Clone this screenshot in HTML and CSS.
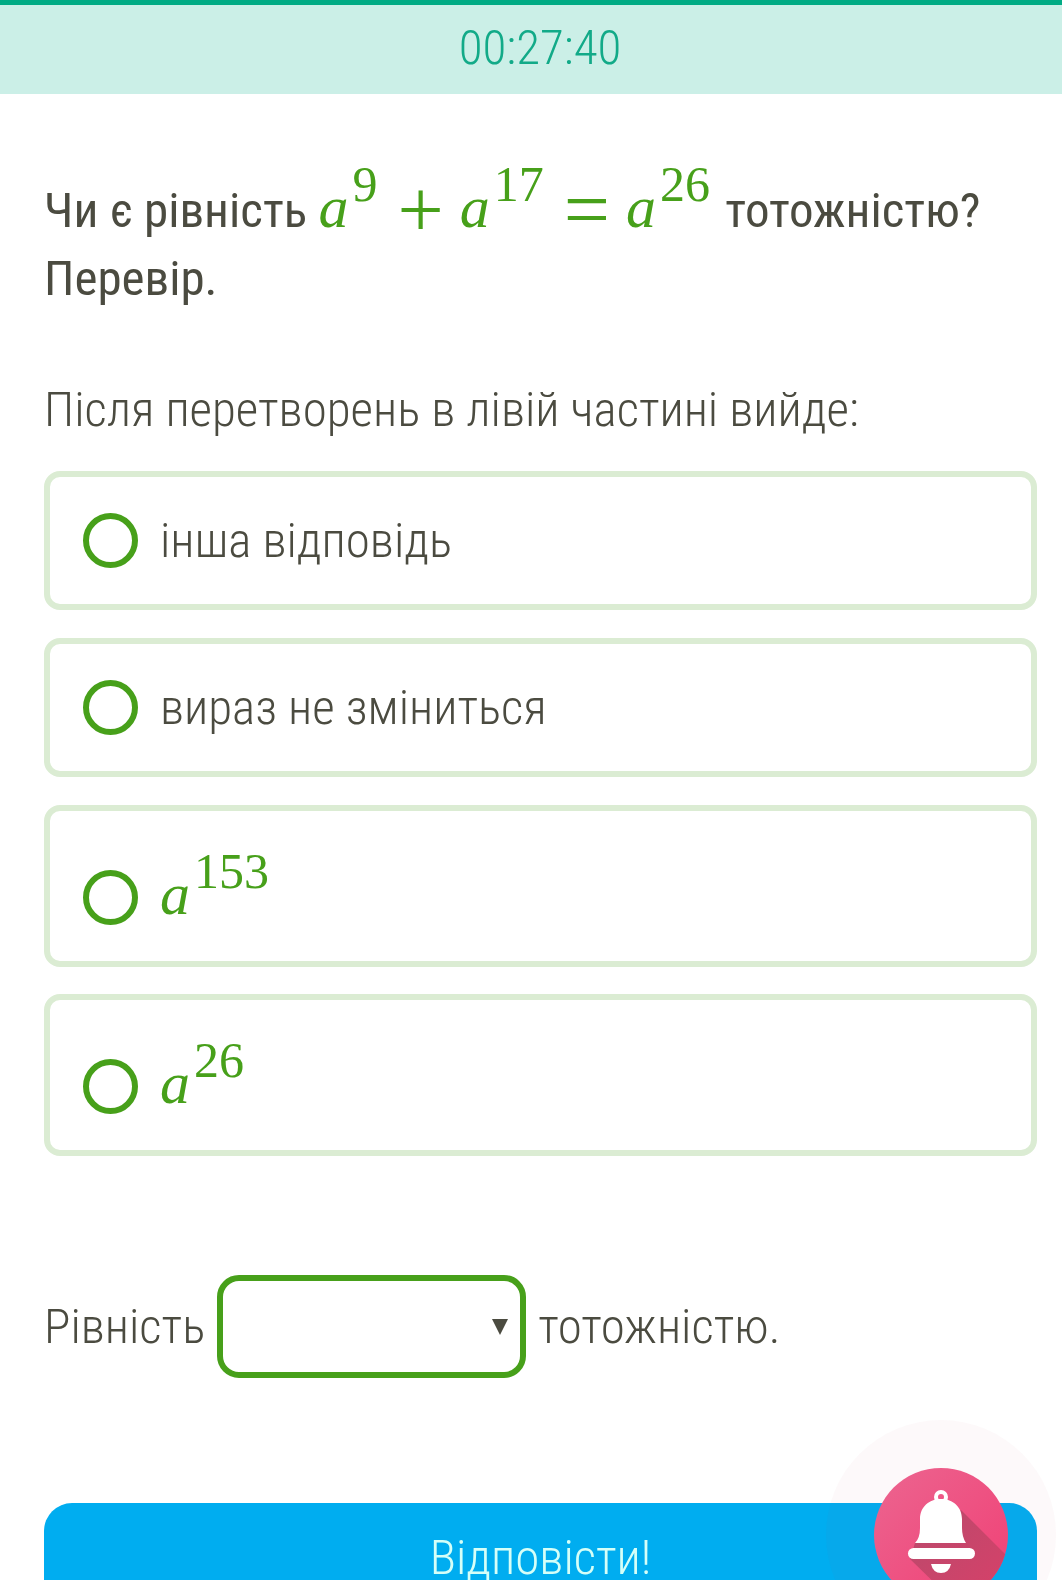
FILE: index.html
```html
<!DOCTYPE html>
<html lang="uk">
<head>
    <meta charset="UTF-8">
    <meta name="viewport" content="width=device-width, initial-scale=1.0">
    <title>Тотожність</title>
    <link rel="stylesheet" href="styles.css">
</head>
<body>
    <header class="timer">00:27:40</header>
    <form class="task">
        <h1 class="question">Чи є рівність <span class="math"><i>a</i><sup>9</sup><span class="op">+</span><i>a</i><sup>17</sup><span class="op">=</span><i>a</i><sup>26</sup></span> тотожністю? Перевір.</h1>
        <!-- answers -->
        <fieldset class="answers">
            <legend>Після перетворень в лівій частині вийде:</legend>
            <label class="answer"><input type="radio" name="answer"><span>інша відповідь</span></label>
            <label class="answer"><input type="radio" name="answer"><span>вираз не зміниться</span></label>
            <label class="answer power"><input type="radio" name="answer"><span class="math"><i>a</i><sup>153</sup></span></label>
            <label class="answer power"><input type="radio" name="answer"><span class="math"><i>a</i><sup>26</sup></span></label>
        </fieldset>
        <!-- end answers -->
        <div class="conclusion">
            <label for="identity">Рівність</label>
            <div class="dropdown">
                <select id="identity">
                    <option></option>
                    <option>є</option>
                    <option>не є</option>
                </select>
            </div>
            <span>тотожністю.</span>
        </div>
        <button type="submit" class="submit">Відповісти!</button>
    </form>
    <button type="button" class="bell" aria-label="Сповіщення">
        <svg viewBox="0 0 134 134" width="134" height="134">
            <defs>
                <linearGradient id="pink" x1="0" y1="0" x2="1" y2="1">
                    <stop offset="0" stop-color="#ec6590"/>
                    <stop offset="1" stop-color="#f03f74"/>
                </linearGradient>
                <linearGradient id="shade" x1="0" y1="0" x2="1" y2="1">
                    <stop offset="0" stop-color="#b84a6c"/>
                    <stop offset="1" stop-color="#d94069"/>
                </linearGradient>
                <clipPath id="round"><circle cx="67" cy="67" r="67"/></clipPath>
            </defs>
            <circle cx="67" cy="67" r="67" fill="url(#pink)"/>
            <path d="M87 42L134 89V134H80L36 91L41 75Z" fill="url(#shade)" clip-path="url(#round)"/>
            <circle cx="67" cy="29" r="5" fill="none" stroke="#fff" stroke-width="4"/>
            <path d="M67 31C55 31 46 39 46 51V60Q46 70 41 75H92Q88 69 88 60V51C88 39 79 31 67 31Z" fill="#fff"/>
            <rect x="34" y="80" width="67" height="11" rx="5.5" fill="#fff"/>
            <path d="M57 96H77Q75 105 67 105Q59 105 57 96Z" fill="#fff"/>
        </svg>
    </button>
</body>
</html>
```
FILE: styles.css
```css
*{
    box-sizing: border-box;
}
body{
    margin: 0;
    font-family: "Roboto Condensed", "Liberation Sans Narrow", Roboto, sans-serif;
    font-size: 49px;
    font-weight: 300;
    line-height: 68px;
    color: #4b4b40;
    background-color: #fff;
}
.timer{
    height: 94px;
    padding-left: 18px;
    border-top: 5px solid #00ab84;
    background-color: #cbeFe7;
    color: #12aa88;
    text-align: center;
    line-height: 86px;
}
.task{
    padding: 83px 25px 0 44px;
}
.question{
    margin: 0;
    font-size: 49px;
    font-weight: 400;
}
.math{
    font-family: "Liberation Serif", serif;
    font-size: 60px;
    font-weight: 400;
    line-height: 1;
    color: #47a01a;
}
.math sup{
    margin: 0 4px;
    font-size: 50px;
    line-height: 0;
    vertical-align: 26px;
}
.op{
    margin: 0 16px;
    font-size: 82px;
    line-height: 0;
    vertical-align: -10px;
}
.answers{
    margin: 63px 0 0;
    padding: 0;
    border: 0;
}
.answers legend{
    padding: 0;
    margin-bottom: 27px;
}
.answer{
    display: flex;
    align-items: center;
    gap: 22px;
    height: 139px;
    margin-bottom: 28px;
    padding: 0 33px;
    border: 6px solid #dbecd3;
    border-radius: 16px;
}
.power{
    height: 162px;
    padding-top: 22px;
    margin-bottom: 27px;
}
.power .math{
    padding-bottom: 6px;
}
.answer input{
    appearance: none;
    width: 55px;
    height: 55px;
    margin: 0;
    border: 6px solid #47a01a;
    border-radius: 50%;
    background-color: #fff;
}
.conclusion{
    display: flex;
    align-items: center;
    gap: 12px;
    margin: 92px 0 125px;
}
.dropdown{
    position: relative;
}
.dropdown::after{
    content: "";
    position: absolute;
    top: 44px;
    right: 18px;
    border: 8px solid transparent;
    border-top: 16px solid #4b4b40;
    border-bottom: 0;
}
.dropdown select{
    display: block;
    appearance: none;
    width: 309px;
    height: 103px;
    border: 6px solid #47a01a;
    border-radius: 22px;
    background-color: #fff;
    font: inherit;
    color: inherit;
}
.submit{
    display: block;
    width: 100%;
    height: 110px;
    border: 0;
    border-radius: 28px;
    background-color: #00adf0;
    color: #d5fff8;
    font: inherit;
}
.bell{
    position: fixed;
    right: 54px;
    bottom: -22px;
    width: 134px;
    height: 134px;
    padding: 0;
    border: 0;
    border-radius: 50%;
    background: none;
    box-shadow: 0 0 0 48px rgba(190, 60, 100, 0.03);
}
.bell svg{
    display: block;
}
```
